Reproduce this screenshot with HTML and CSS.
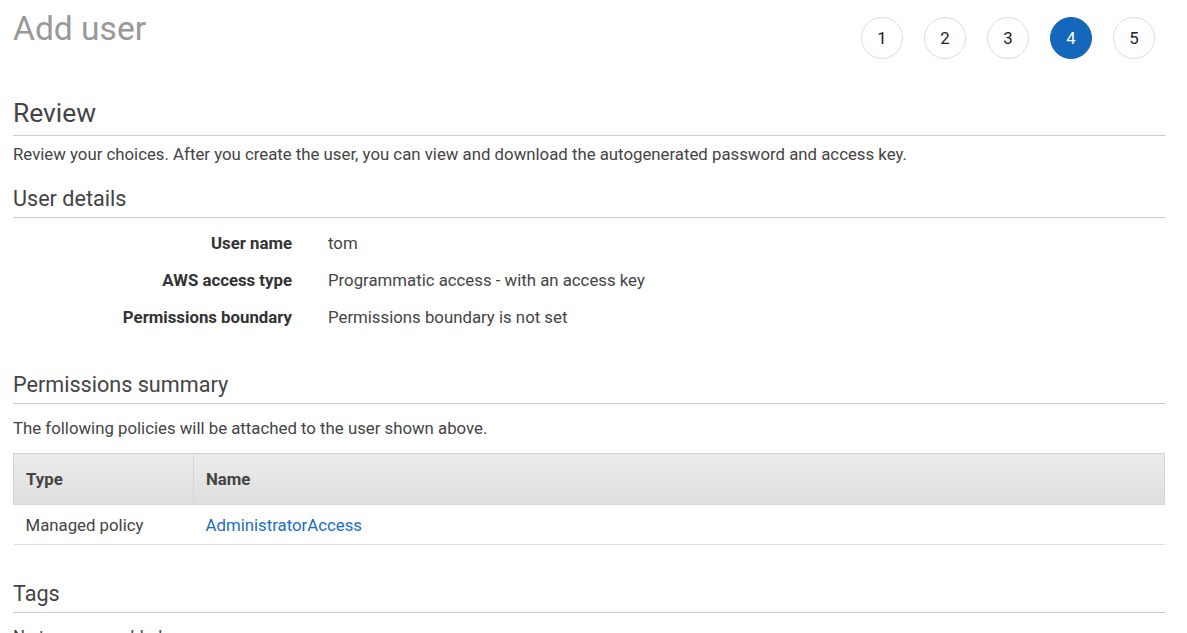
FILE: index.html
```html
<!DOCTYPE html>
<html>
<head>
<meta charset="utf-8">
<link rel="stylesheet" href="styles.css">
</head>
<body>
<div class="page">
  <div class="header">
    <h1 class="title">Add user</h1>
    <div class="steps">
      <span class="step">1</span>
      <span class="step">2</span>
      <span class="step">3</span>
      <span class="step active">4</span>
      <span class="step">5</span>
    </div>
  </div>

  <h2 class="h-review">Review</h2>
  <p class="desc">Review your choices. After you create the user, you can view and download the autogenerated password and access key.</p>

  <h3 class="section">User details</h3>
  <div class="details">
    <div class="dl">User name</div><div class="dv">tom</div>
    <div class="dl">AWS access type</div><div class="dv">Programmatic access - with an access key</div>
    <div class="dl">Permissions boundary</div><div class="dv">Permissions boundary is not set</div>
  </div>

  <h3 class="section perm">Permissions summary</h3>
  <p class="desc2">The following policies will be attached to the user shown above.</p>
  <table class="policies">
    <thead>
      <tr><th class="c1">Type</th><th>Name</th></tr>
    </thead>
    <tbody>
      <tr><td class="c1">Managed policy</td><td><a href="#" class="link">AdministratorAccess</a></td></tr>
    </tbody>
  </table>

  <h3 class="section tags">Tags</h3>
  <p class="desc3">No tags were added.</p>
</div>
</body>
</html>
```
FILE: styles.css
```css
html, body {
  margin: 0;
  padding: 0;
  background: #fff;
}
body {
  font-family: Roboto, "Liberation Sans", Arial, sans-serif;
  color: #444;
  font-size: 16.8px;
}
.page {
  padding: 0 22px 0 13px;
}
.header {
  display: flex;
  justify-content: space-between;
  align-items: flex-start;
}
.title {
  margin: 0;
  padding-top: 10px;
  font-size: 33.6px;
  line-height: 37px;
  font-weight: 400;
  color: #999;
}
.steps {
  display: flex;
  gap: 21px;
  margin-top: 17px;
  margin-right: 10px;
}
.step {
  width: 40px;
  height: 40px;
  border: 1px solid #ddd;
  border-radius: 50%;
  display: flex;
  align-items: center;
  justify-content: center;
  font-size: 16.8px;
  color: #222;
  background: #fff;
}
.step.active {
  background: #1467bb;
  border-color: #1467bb;
  color: #fff;
}
.h-review {
  margin: 38px 0 0;
  font-size: 26.4px;
  line-height: 33px;
  font-weight: 400;
  color: #444;
  padding-bottom: 5px;
  border-bottom: 1px solid #ccc;
}
.desc {
  margin: 8px 0 0;
  line-height: 20px;
}
.section {
  margin: 0;
  font-size: 21.6px;
  line-height: 28px;
  font-weight: 400;
  color: #444;
  padding-bottom: 4px;
  border-bottom: 1px solid #ccc;
}
.desc + .section {
  margin-top: 21px;
}
.details {
  display: grid;
  grid-template-columns: 279px 1fr;
  column-gap: 36px;
  row-gap: 17px;
  margin-top: 15px;
  line-height: 20px;
}
.dl {
  text-align: right;
  font-weight: 700;
  color: #333;
}
.dv {
  color: #444;
}
.section.perm {
  margin-top: 44px;
}
.desc2 {
  margin: 14px 0 0;
  line-height: 20px;
}
.policies {
  width: 100%;
  border-collapse: collapse;
  margin-top: 15px;
}
.policies th {
  text-align: left;
  font-weight: 700;
  color: #444;
  height: 50px;
  padding: 0 12px;
  background: linear-gradient(#ececec, #dedede);
  border: 1px solid #d6d6d6;
  border-left: none;
  border-right: none;
}
.policies th.c1 {
  width: 155px;
  border-left: 1px solid #d6d6d6;
  border-right: 1px solid #d6d6d6;
}
.policies th:last-child {
  border-right: 1px solid #d6d6d6;
}
.policies td {
  height: 39px;
  padding: 0 12px;
  color: #444;
  border-bottom: 1px solid #ddd;
}
.link {
  color: #1a6dc3;
  text-decoration: none;
}
.section.tags {
  margin-top: 35px;
}
.desc3 {
  margin: 13px 0 0;
  line-height: 20px;
}
```
